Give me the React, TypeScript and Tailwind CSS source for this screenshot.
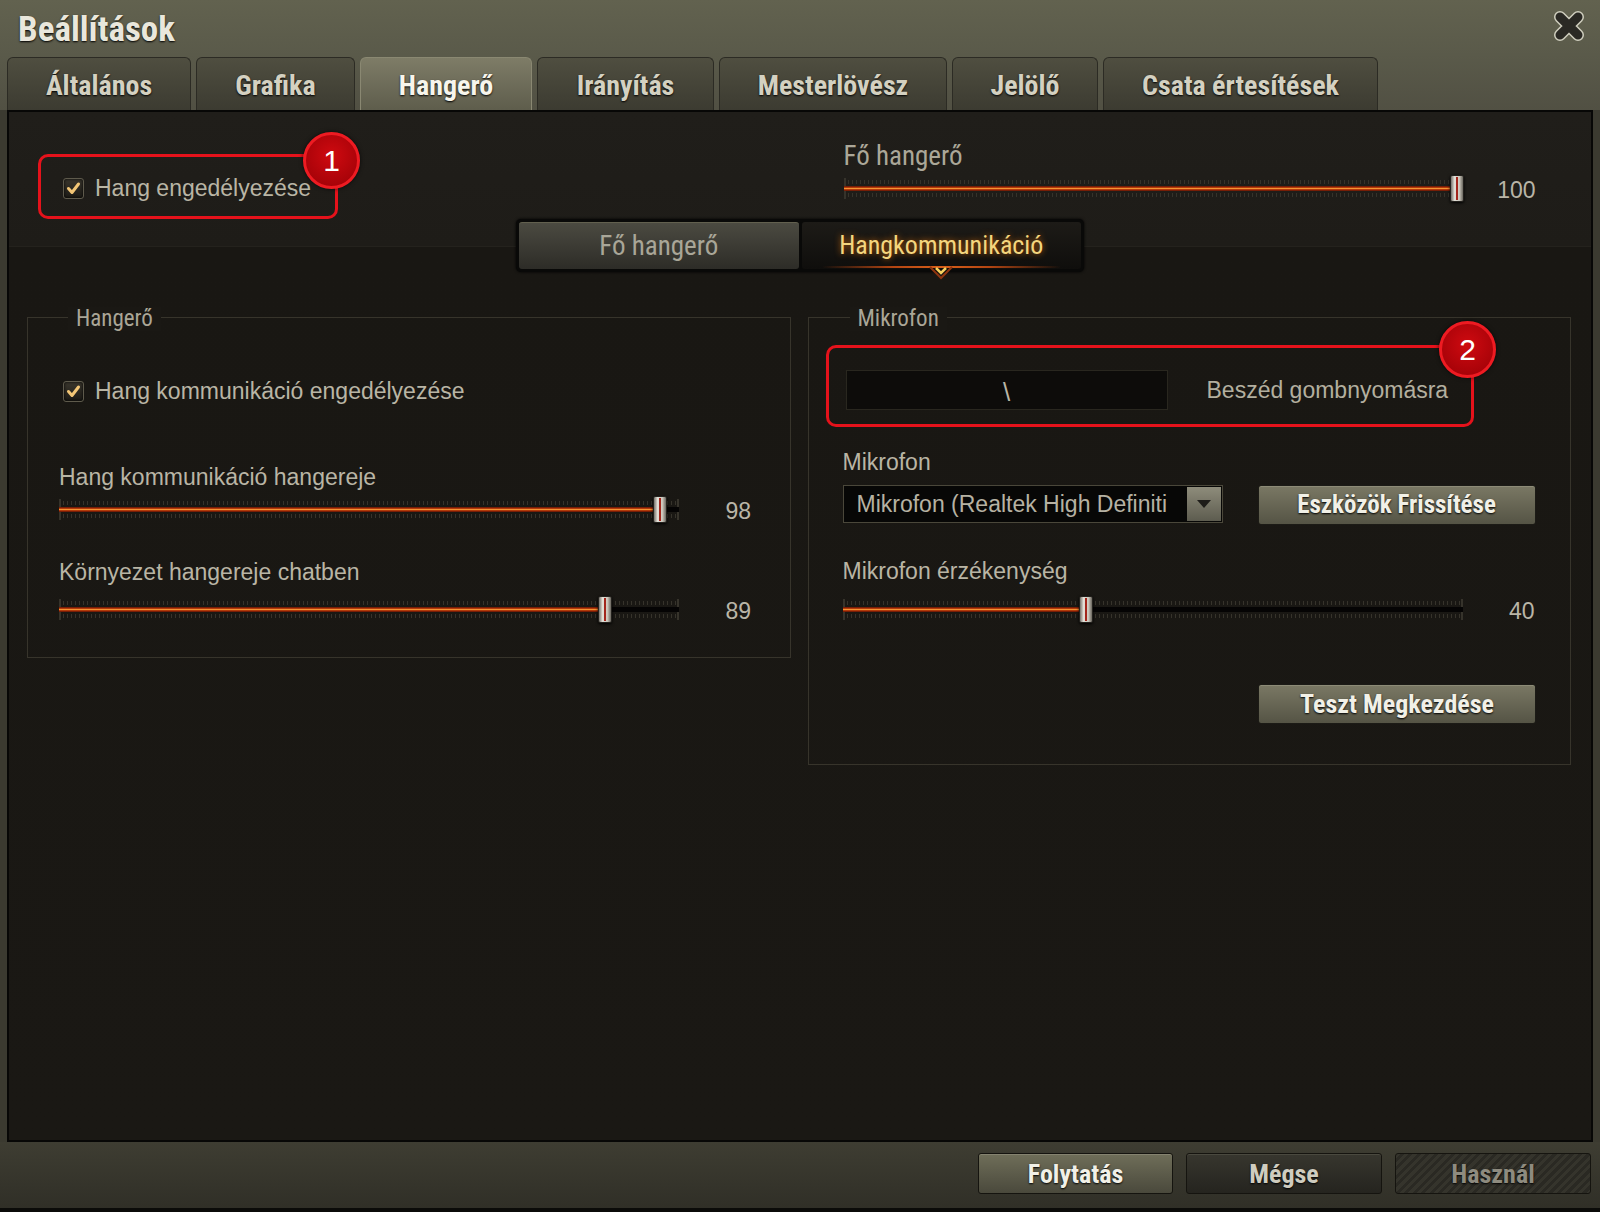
import React from "react";

const COND = "[font-family:'Roboto_Condensed','Open_Sans_Condensed','Liberation_Sans',sans-serif]";
const SANS = "[font-family:'Liberation_Sans',Arial,sans-serif]";

function Check() {
  return (
    <div className="w-[21px] h-[21px] rounded-[3px] border border-[#5e5a4c] bg-[linear-gradient(180deg,#3a362d,#1c1a15)] shadow-[inset_0_0_3px_#000] flex items-center justify-center shrink-0">
      <svg width="15" height="15" viewBox="0 0 15 15">
        <path d="M2.5 7.5 L6 11.5 L12.5 3" fill="none" stroke="#f3c676" strokeWidth="3" strokeLinecap="round" strokeLinejoin="round" />
      </svg>
    </div>
  );
}

function Slider({ pct, value }: { pct: number; value: string }) {
  const thumb = Math.round(pct * 606);
  return (
    <div className="flex items-center h-[30px]">
      <div className="relative w-[620px] h-[30px]">
        <div className="absolute left-0 right-0 top-[7px] h-[4px] bg-[repeating-linear-gradient(90deg,#36332b_0_1px,transparent_1px_4px)]" />
        <div className="absolute left-0 right-0 top-[20px] h-[4px] bg-[repeating-linear-gradient(90deg,#36332b_0_1px,transparent_1px_4px)]" />
        <div className="absolute left-0 top-[5px] w-[2px] h-[21px] bg-[#36332b]" />
        <div className="absolute right-0 top-[5px] w-[2px] h-[21px] bg-[#36332b]" />
        <div className="absolute left-0 right-0 top-[13px] h-[5px] bg-[#050404]" />
        <div
          className="absolute left-0 top-[13px] h-[5px] bg-[linear-gradient(180deg,#5a1004,#c2410c_35%,#f59332_50%,#c2410c_65%,#5a1004)]"
          style={{ width: thumb + 7 }}
        />
        <div
          className="absolute top-[2px] w-[14px] h-[27px] rounded-[2px] border border-[#23211d] bg-[linear-gradient(90deg,#75716a,#e4e1d8_30%,#cbc7bc_70%,#6b675f)] shadow-[0_1px_3px_#000]"
          style={{ left: thumb }}
        >
          <div className="absolute left-[5px] top-[1px] bottom-[1px] w-[2px] bg-[#a3261c]" />
        </div>
      </div>
      <div className={`w-[72px] pt-[3px] text-right text-[23px] leading-[28px] text-[#b9b5a7] ${SANS}`}>{value}</div>
    </div>
  );
}

function Badge({ n, className }: { n: string; className: string }) {
  return (
    <div
      className={`absolute w-[57px] h-[57px] rounded-full border-[3px] border-[#ee1b22] bg-[radial-gradient(circle_at_50%_40%,#cf0a10,#9a0006)] flex items-center justify-center text-white text-[30px] leading-none shadow-[0_0_4px_rgba(0,0,0,0.7)] ${SANS} ${className}`}
    >
      {n}
    </div>
  );
}

const tabs: { label: string; w: string; active?: boolean }[] = [
  { label: "Általános", w: "w-[184px]" },
  { label: "Grafika", w: "w-[159px]" },
  { label: "Hangerő", w: "w-[172px]", active: true },
  { label: "Irányítás", w: "w-[177px]" },
  { label: "Mesterlövész", w: "w-[228px]" },
  { label: "Jelölő", w: "w-[146px]" },
  { label: "Csata értesítések", w: "w-[275px]" },
];

export default function App() {
  return (
    <div className={`w-[1600px] h-[1212px] flex flex-col bg-[#3b3a30] overflow-hidden ${SANS}`}>
      {/* header */}
      <div className="bg-[linear-gradient(180deg,#62624f_0%,#5a5a4a_50%,#515043_100%)]">
        <div className="h-[57px] flex items-start justify-between pl-[18px] pr-[15px]">
          <div className={`mt-[10px] text-[35px] leading-[40px] font-bold text-[#e9e7dc] [text-shadow:0_1px_2px_#000] ${COND}`}>
            Beállítások
          </div>
          <svg className="mt-[11px]" width="32" height="30" viewBox="0 0 32 30">
            <path d="M7 6 L25 24 M25 6 L7 24" stroke="#cfcebe" strokeWidth="12" strokeLinecap="round" />
            <path d="M7 6 L25 24 M25 6 L7 24" stroke="#2a2924" strokeWidth="9" strokeLinecap="round" />
          </svg>
        </div>
        <div className="h-[53px] flex items-end gap-[5px] pl-[7px]">
          {tabs.map((t) => (
            <div
              key={t.label}
              className={`${t.w} h-[53px] rounded-t-[6px] border border-b-0 flex items-center justify-center pt-[3px] text-[28px] font-bold ${COND} [text-shadow:0_1px_2px_#000] ${
                t.active
                  ? "border-[#8a8872] bg-[linear-gradient(180deg,#7e7c67,#5e5d4c)] text-[#f7f5ec]"
                  : "border-[#2c2b24] bg-[linear-gradient(180deg,#4f4e40,#3c3b31)] text-[#d4d1c1]"
              }`}
            >
              {t.label}
            </div>
          ))}
        </div>
      </div>

      {/* content panel */}
      <div className="relative mx-[7px] flex-1 border-2 border-[#070706] bg-[linear-gradient(180deg,#201e1a_0,#1e1c18_134px,#24221d_134px,#24221d_135px,#191713_135px,#1a1814_100%)]">
        {/* top row */}
        <div className="h-[107px] grid grid-cols-2 gap-[17px] pl-[18px] pr-[20px]">
          <div className="pl-[36px] pt-[62px]">
            <div className="flex items-center h-[28px] gap-[11px]">
              <Check />
              <span className="text-[23px] text-[#b9b5a5]">Hang engedélyezése</span>
            </div>
          </div>
          <div className="pl-[36px] pt-[30px]">
            <div className={`text-[27px] leading-[28px] text-[#aba798] ${COND}`}>Fő hangerő</div>
            <div className="mt-[3px]">
              <Slider pct={1} value="100" />
            </div>
          </div>
        </div>

        {/* sub tabs */}
        <div className="mx-auto w-[568px] h-[53px] rounded-[5px] bg-[#090908] p-[3px] flex gap-[3px] shadow-[0_0_3px_#000]">
          <div className={`flex-1 rounded-[3px] bg-[linear-gradient(180deg,#4b4a41,#2d2c27)] border-t border-[#62604f] flex items-center justify-center text-[27px] text-[#a9a698] ${COND}`}>
            Fő hangerő
          </div>
          <div className="relative flex-1 rounded-[3px] bg-[linear-gradient(180deg,#1d1b17,#0f0e0c)] flex items-center justify-center">
            <span className={`text-[26px] text-[#f4d57e] [text-shadow:0_0_6px_#b9600d] ${COND}`}>Hangkommunikáció</span>
            <div className="absolute left-[20px] right-[20px] bottom-[1px] h-[2px] bg-[linear-gradient(90deg,transparent,#b34512_30%,#d8601a_50%,#b34512_70%,transparent)]" />
            <svg className="absolute left-1/2 -translate-x-1/2 bottom-[-12px]" width="26" height="16" viewBox="0 0 26 16">
              <path d="M2 2 L13 13 L24 2" fill="none" stroke="#8e3510" strokeWidth="2" />
              <path d="M8 3 L13 8 L18 3" fill="none" stroke="#f5d060" strokeWidth="2.5" />
            </svg>
          </div>
        </div>

        {/* group boxes */}
        <div className="mt-[45px] grid grid-cols-2 gap-[17px] pl-[18px] pr-[20px] items-start">
          <div className="relative border border-[#37342b] pl-[31px] pt-[59px] pb-[33px]">
            <div className={`absolute -top-[11px] left-[40px] px-[8px] bg-[#1a1814] text-[23px] leading-[24px] text-[#aaa697] ${COND}`}>Hangerő</div>
            <div className="ml-[4px] flex items-center h-[28px] gap-[11px]">
              <Check />
              <span className="text-[23px] text-[#b9b5a5]">Hang kommunikáció engedélyezése</span>
            </div>
            <div className="mt-[58px] text-[23px] leading-[28px] text-[#b9b5a5]">Hang kommunikáció hangereje</div>
            <div className="mt-[3px]">
              <Slider pct={0.98} value="98" />
            </div>
            <div className="mt-[34px] text-[23px] leading-[28px] text-[#b9b5a5]">Környezet hangereje chatben</div>
            <div className="mt-[8px]">
              <Slider pct={0.89} value="89" />
            </div>
          </div>

          <div className="relative border border-[#37342b] pl-[34px] pt-[52px] pb-[40px]">
            <div className={`absolute -top-[11px] left-[41px] px-[8px] bg-[#1a1814] text-[23px] leading-[24px] text-[#aaa697] ${COND}`}>Mikrofon</div>
            <div className="flex items-center h-[40px]">
              <div className="ml-[3px] w-[322px] h-[40px] bg-[#0d0c0a] border border-[#29271f] flex items-center justify-center pt-[4px] text-[26px] text-[#b9b5a5]">
                \
              </div>
              <span className="ml-[39px] text-[23px] text-[#b3af9f]">Beszéd gombnyomásra</span>
            </div>
            <div className="mt-[38px] text-[23px] leading-[28px] text-[#b9b5a5]">Mikrofon</div>
            <div className="mt-[9px] flex items-start">
              <div className="w-[380px] h-[38px] bg-[#070706] border border-[#4a473a] flex items-center overflow-hidden">
                <span className="flex-1 pl-[13px] text-[23px] text-[#b6b2a3] whitespace-nowrap overflow-hidden">Mikrofon (Realtek High Definiti</span>
                <div className="w-[34px] h-[34px] mr-[1px] bg-[linear-gradient(180deg,#8e8c7b,#5d5c4f)] flex items-center justify-center shrink-0">
                  <svg width="16" height="10" viewBox="0 0 16 10">
                    <path d="M1 1 L15 1 L8 9 Z" fill="#1e1d19" />
                  </svg>
                </div>
              </div>
              <div className={`ml-[35px] w-[278px] h-[40px] rounded-[3px] border border-[#1c1b16] bg-[linear-gradient(180deg,#7a7864,#555445)] shadow-[inset_0_1px_0_#8d8b77] flex items-center justify-center text-[25px] font-bold text-[#f1f0e7] [text-shadow:0_1px_2px_#000] ${COND}`}>
                Eszközök Frissítése
              </div>
            </div>
            <div className="mt-[32px] text-[23px] leading-[28px] text-[#b9b5a5]">Mikrofon érzékenység</div>
            <div className="mt-[9px]">
              <Slider pct={0.39} value="40" />
            </div>
            <div className="mt-[60px] flex justify-end pr-[34px]">
              <div className={`w-[278px] h-[40px] rounded-[3px] border border-[#1c1b16] bg-[linear-gradient(180deg,#7a7864,#555445)] shadow-[inset_0_1px_0_#8d8b77] flex items-center justify-center text-[26px] font-bold text-[#f1f0e7] [text-shadow:0_1px_2px_#000] ${COND}`}>
                Teszt Megkezdése
              </div>
            </div>
          </div>
        </div>

        {/* annotations */}
        <div className="absolute left-[29px] top-[42px] w-[300px] h-[65px] rounded-[10px] border-[3px] border-[#e5121b]" />
        <Badge n="1" className="left-[294px] top-[20px]" />
        <div className="absolute left-[817px] top-[233px] w-[648px] h-[82px] rounded-[10px] border-[3px] border-[#e5121b]" />
        <Badge n="2" className="left-[1430px] top-[209px]" />
      </div>

      {/* footer */}
      <div className="h-[70px] bg-[linear-gradient(180deg,#3e3d32,#302f27)] border-b-[4px] border-[#0b0b09] flex items-start justify-end gap-[13px] pr-[9px] pt-[11px]">
        <div className={`w-[195px] h-[41px] rounded-[3px] border border-[#15140f] bg-[linear-gradient(180deg,#6f6e59,#4a493c)] shadow-[inset_0_1px_0_#858370] flex items-center justify-center pt-[2px] text-[26px] font-bold text-[#f1f0e7] [text-shadow:0_1px_2px_#000] ${COND}`}>
          Folytatás
        </div>
        <div className={`w-[196px] h-[41px] rounded-[3px] border border-[#15140f] bg-[linear-gradient(180deg,#37362e,#25241f)] shadow-[inset_0_1px_0_#4a493f] flex items-center justify-center pt-[2px] text-[26px] font-bold text-[#cfccbf] [text-shadow:0_1px_2px_#000] ${COND}`}>
          Mégse
        </div>
        <div className={`w-[196px] h-[41px] rounded-[3px] border border-[#15140f] bg-[repeating-linear-gradient(135deg,#35342c_0_3px,#2a2923_3px_6px)] flex items-center justify-center pt-[2px] text-[26px] font-bold text-[#8e8b7f] [text-shadow:0_1px_2px_#000] ${COND}`}>
          Használ
        </div>
      </div>
    </div>
  );
}
